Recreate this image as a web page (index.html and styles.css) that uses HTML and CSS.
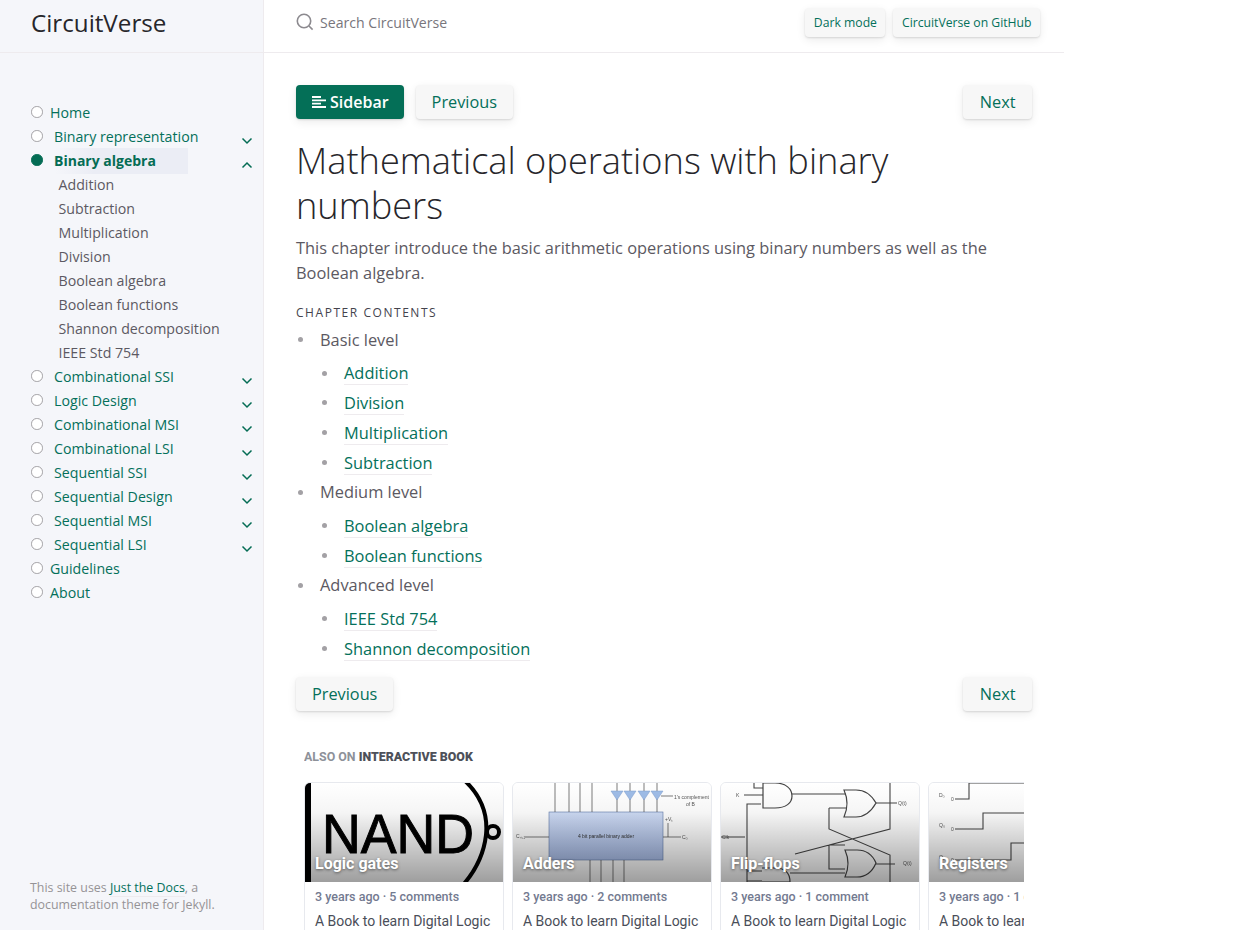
FILE: index.html
```html
<!DOCTYPE html>
<html lang="en">
<head>
<meta charset="utf-8">
<title>Mathematical operations with binary numbers</title>
<link rel="stylesheet" href="styles.css">
</head>
<body>
<div class="page">
  <aside class="sidebar">
    <div class="brand"><a class="brand-link" href="#">CircuitVerse</a></div>
    <nav class="nav">
      <div class="nav-row"><span class="dot"></span><a class="nav-link plain" href="#">Home</a></div>
      <div class="nav-row"><span class="dot"></span><a class="nav-link" href="#">Binary representation</a><svg class="chev" viewBox="0 0 12 8"><path d="M1.5 1.5 6 6l4.5-4.5"/></svg></div>
      <div class="nav-row"><span class="dot on"></span><a class="nav-link active" href="#">Binary algebra</a><svg class="chev" viewBox="0 0 12 8"><path d="M1.5 6.5 6 2l4.5 4.5"/></svg></div>
      <div class="sub">Addition</div>
      <div class="sub">Subtraction</div>
      <div class="sub">Multiplication</div>
      <div class="sub">Division</div>
      <div class="sub">Boolean algebra</div>
      <div class="sub">Boolean functions</div>
      <div class="sub">Shannon decomposition</div>
      <div class="sub">IEEE Std 754</div>
      <div class="nav-row"><span class="dot"></span><a class="nav-link" href="#">Combinational SSI</a><svg class="chev" viewBox="0 0 12 8"><path d="M1.5 1.5 6 6l4.5-4.5"/></svg></div>
      <div class="nav-row"><span class="dot"></span><a class="nav-link" href="#">Logic Design</a><svg class="chev" viewBox="0 0 12 8"><path d="M1.5 1.5 6 6l4.5-4.5"/></svg></div>
      <div class="nav-row"><span class="dot"></span><a class="nav-link" href="#">Combinational MSI</a><svg class="chev" viewBox="0 0 12 8"><path d="M1.5 1.5 6 6l4.5-4.5"/></svg></div>
      <div class="nav-row"><span class="dot"></span><a class="nav-link" href="#">Combinational LSI</a><svg class="chev" viewBox="0 0 12 8"><path d="M1.5 1.5 6 6l4.5-4.5"/></svg></div>
      <div class="nav-row"><span class="dot"></span><a class="nav-link" href="#">Sequential SSI</a><svg class="chev" viewBox="0 0 12 8"><path d="M1.5 1.5 6 6l4.5-4.5"/></svg></div>
      <div class="nav-row"><span class="dot"></span><a class="nav-link" href="#">Sequential Design</a><svg class="chev" viewBox="0 0 12 8"><path d="M1.5 1.5 6 6l4.5-4.5"/></svg></div>
      <div class="nav-row"><span class="dot"></span><a class="nav-link" href="#">Sequential MSI</a><svg class="chev" viewBox="0 0 12 8"><path d="M1.5 1.5 6 6l4.5-4.5"/></svg></div>
      <div class="nav-row"><span class="dot"></span><a class="nav-link" href="#">Sequential LSI</a><svg class="chev" viewBox="0 0 12 8"><path d="M1.5 1.5 6 6l4.5-4.5"/></svg></div>
      <div class="nav-row"><span class="dot"></span><a class="nav-link plain" href="#">Guidelines</a></div>
      <div class="nav-row"><span class="dot"></span><a class="nav-link plain" href="#">About</a></div>
    </nav>
    <footer class="side-foot">This site uses <a href="#">Just the Docs</a>, a documentation theme for Jekyll.</footer>
  </aside>
  <div class="main">
    <header class="topbar">
      <div class="search">
        <svg class="search-icon" viewBox="0 0 18 18"><circle cx="8" cy="8" r="6.7"/><path d="m13 13 3.6 3.6"/></svg>
        <span>Search CircuitVerse</span>
      </div>
      <a class="btn small" href="#">Dark mode</a>
      <a class="btn small" href="#">CircuitVerse on GitHub</a>
    </header>
    <main class="content">
      <div class="pager top">
        <a class="btn primary" href="#"><svg class="bars" viewBox="0 0 14 12"><path d="M0 1h9M0 4.3h14M0 7.6h9M0 11h14"/></svg>Sidebar</a>
        <a class="btn" href="#">Previous</a>
        <a class="btn next" href="#">Next</a>
      </div>
      <h1>Mathematical operations with binary numbers</h1>
      <p class="lead">This chapter introduce the basic arithmetic operations using binary numbers as well as the Boolean algebra.</p>
      <h2>Chapter contents</h2>
      <ul class="toc">
        <li>Basic level
          <ul>
            <li><a href="#">Addition</a></li>
            <li><a href="#">Division</a></li>
            <li><a href="#">Multiplication</a></li>
            <li><a href="#">Subtraction</a></li>
          </ul>
        </li>
        <li>Medium level
          <ul>
            <li><a href="#">Boolean algebra</a></li>
            <li><a href="#">Boolean functions</a></li>
          </ul>
        </li>
        <li>Advanced level
          <ul>
            <li><a href="#">IEEE Std 754</a></li>
            <li><a href="#">Shannon decomposition</a></li>
          </ul>
        </li>
      </ul>
      <div class="pager bottom">
        <a class="btn" href="#">Previous</a>
        <a class="btn next" href="#">Next</a>
      </div>
      <section class="also">
        <h3>ALSO ON <b>INTERACTIVE BOOK</b></h3>
        <div class="cards">
          <article class="card">
            <div class="thumb">
              <svg viewBox="0 0 198 99">
                <rect width="198" height="99" fill="#fff"/>
                <rect x="0" y="0" width="6" height="99" fill="#000"/>
                <text class="nand" x="17" y="70" textLength="152" lengthAdjust="spacingAndGlyphs">NAND</text>
                <path class="ink" d="M158-4C176 12 183 32 181 52 179 70 172 86 158 102"/>
                <circle class="ink" cx="188" cy="49" r="6"/>
              </svg>
              <span class="thumb-title">Logic gates</span>
            </div>
            <div class="meta">3 years ago · 5 comments</div>
            <div class="book">A Book to learn Digital Logic</div>
          </article>
          <article class="card">
            <div class="thumb">
              <svg viewBox="0 0 198 99">
                <defs><linearGradient id="blue" x1="0" y1="0" x2="0" y2="1"><stop offset="0" stop-color="#cfdcf5"/><stop offset="1" stop-color="#abbfea"/></linearGradient></defs>
                <rect width="198" height="99" fill="#fff"/>
                <rect x="36" y="29" width="114" height="48" fill="url(#blue)" stroke="#5f78a8" stroke-width=".6"/>
                <path class="wire" d="M42 0v29M56 0v29M67 0v29M79 0v29M104 0v29M117 0v29M131 0v29M144 0v29M77 77v22M88 77v22M100 77v22M111 77v22M12 54h24M150 54h18M155 40v14M148 13h12"/>
                <path fill="#9fbde8" stroke="#7d9ccc" stroke-width=".5" d="M98 8h12l-6 9zM111 8h12l-6 9zM125 8h12l-6 9zM138 8h12l-6 9z"/>
                <text class="tiny mid" x="93" y="55">4 bit parallel binary adder</text>
                <text class="tiny" x="161" y="16">1's complement</text>
                <text class="tiny" x="173" y="23">of B</text>
                <text class="tiny" x="3" y="55">Cₙ₊₁</text>
                <text class="tiny" x="169" y="56">C₀</text>
                <text class="tiny" x="152" y="38">+Vₛ</text>
              </svg>
              <span class="thumb-title">Adders</span>
            </div>
            <div class="meta">3 years ago · 2 comments</div>
            <div class="book">A Book to learn Digital Logic</div>
          </article>
          <article class="card">
            <div class="thumb">
              <svg viewBox="0 0 198 99">
                <rect width="198" height="99" fill="#fff"/>
                <path class="gate" d="M42 0h12C65 0 71 6 71 13S65 25 54 25H42Z"/>
                <path class="gate" d="M123 7h12C145 7 151 13 155 20 151 27 145 34 135 34H123C127 25 127 16 123 7Z"/>
                <path class="gate" d="M124 67h12C146 67 152 73 155 80 152 87 146 94 136 94H124C128 85 128 76 124 67Z"/>
                <path class="gate" d="M41 85h13C64 85 69 90 69 99H41"/>
                <path class="gate-line" d="M23 12H42M40 21H26V99M0 54H24M71 11H125M155 20H176M169 0V46L74 71M108 25H125M108 25V46L169 72V99M108 62H124M108 62V86H124M155 81H174M69 90H124M26 88H41M26 98H41M33 0V5H42"/>
                <text class="tiny" x="15" y="14">K</text>
                <text class="tiny" x="1" y="56">Clk</text>
                <text class="tiny" x="177" y="22">Q(t)</text>
                <text class="tiny" x="182" y="82">Q(t)</text>
              </svg>
              <span class="thumb-title">Flip-flops</span>
            </div>
            <div class="meta">3 years ago · 1 comment</div>
            <div class="book">A Book to learn Digital Logic</div>
          </article>
          <article class="card">
            <div class="thumb">
              <svg viewBox="0 0 198 99">
                <rect width="198" height="99" fill="#fff"/>
                <path class="gate-line" d="M26 16H40V0H198M26 46H54V30H198M26 77H82V60H198"/>
                <text class="tiny" x="10" y="14">D₀</text>
                <text class="tiny" x="22" y="18">0</text>
                <text class="tiny" x="10" y="44">Q₀</text>
                <text class="tiny" x="22" y="48">0</text>
                <text class="tiny" x="10" y="76">Q₁</text>
                <text class="tiny" x="22" y="79">0</text>
              </svg>
              <span class="thumb-title">Registers</span>
            </div>
            <div class="meta">3 years ago · 1 comment</div>
            <div class="book">A Book to learn Digital Logic</div>
          </article>
        </div>
      </section>
    </main>
  </div>
</div>
</body>
</html>
```
FILE: styles.css
```css
* { box-sizing: border-box; }
html, body { margin: 0; height: 100%; background: #fff; }
body { font-family: "Open Sans", "Noto Sans", sans-serif; color: #5c5962; overflow: hidden; }
a { color: #04705a; text-decoration: none; }

.page { display: flex; height: 930px; overflow: hidden; }

/* sidebar */
.sidebar { width: 264px; flex: none; display: flex; flex-direction: column; background: #f5f6fa; border-right: 1px solid #eeebee; }
.brand { height: 53px; padding: 0 31px; display: flex; align-items: center; border-bottom: 1px solid #eeebee; }
.brand-link { color: #27262b; font-size: 24.2px; padding-bottom: 8px; }
.nav { padding: 48px 0 0 31px; font-size: 14.2px; }
.nav-row { position: relative; display: flex; align-items: center; height: 24px; }
.dot { width: 11.5px; height: 11.5px; margin-top: -2px; border: 1.5px solid #a3a1a5; border-radius: 50%; background: #fff; flex: none; }
.dot.on { background: #046c54; border-color: #046c54; }
.nav-link { margin-left: 11.5px; line-height: 24px; }
.nav-link.plain { margin-left: 7.5px; }
.nav-link.active { font-weight: 700; font-size: 14px; color: #046c54; width: 134px; height: 26px; line-height: 26px; background: linear-gradient(-90deg, #ebedf5 0%, #ebedf5 70%, rgba(235,237,245,0) 100%); }
.chev { position: absolute; left: 210px; top: 12px; width: 12px; height: 8px; fill: none; stroke: #046c54; stroke-width: 1.5; }
.sub { height: 24px; line-height: 24px; padding-left: 27.5px; }
.side-foot { margin-top: auto; padding: 0 30px 17px; font-size: 12.4px; line-height: 17px; color: #959396; }
.side-foot a { color: #04705a; border-bottom: 1px solid #eeebee; }

/* main */
.main { width: 800px; flex: none; display: flex; flex-direction: column; }
.topbar { height: 53px; flex: none; display: flex; align-items: center; gap: 8px; padding: 0 24px 0 32px; border-bottom: 1px solid #eeebee; }
.search { flex: 1; display: flex; align-items: center; gap: 6px; font-size: 14.1px; color: #78767c; padding-bottom: 8px; }
.search-icon { width: 18px; height: 18px; fill: none; stroke: #8c8a8f; stroke-width: 1.6; }
.btn { display: inline-flex; align-items: center; height: 34px; padding: 0 16px; font-size: 16.3px; background: #f7f7f7; border-radius: 4px; box-shadow: 0 1px 2px rgba(0,0,0,.12), 0 3px 10px rgba(0,0,0,.08); }
.btn.small { height: 29px; padding: 0 8.5px; font-size: 12.2px; margin-bottom: 7px; }
.btn.primary { background: #046f57; color: #fff; font-size: 16px; font-weight: 600; padding: 0 15px 0 16px; }
.bars { width: 14px; height: 12px; margin-right: 4px; fill: none; stroke: #fff; stroke-width: 1.8; }
.next { margin-left: auto; padding: 0 16.5px; }

.content { padding: 32px 32px 0; }
.pager { display: flex; gap: 12px; }
h1 { margin: 19px 0 0; font-size: 36.2px; font-weight: 300; line-height: 45px; color: #27262b; }
.lead { margin: 7px 0 0; font-size: 16.4px; line-height: 25px; }
h2 { margin: 20px 0 0; font-size: 12px; line-height: 16px; font-weight: 400; letter-spacing: 1.55px; text-transform: uppercase; color: #44434d; }
.toc, .toc ul { list-style: none; margin: 0; padding: 0; font-size: 16.4px; }
.toc { margin-top: 6.6px; }
.toc li { position: relative; padding-left: 24px; line-height: 23.6px; }
.toc > li + li { margin-top: 6.1px; }
.toc ul { margin-top: 10px; }
.toc ul li { margin-bottom: 6.2px; }
.toc ul li:last-child { margin-bottom: 0; }
.toc li::before { content: ""; position: absolute; left: 2px; top: 9.5px; width: 5px; height: 5px; border-radius: 50%; background: #a3a1a5; }
.toc a { border-bottom: 1px solid #eeebee; }
.pager.bottom { margin-top: 16.5px; }

/* recommendations */
.also { margin: 0 8px; overflow: hidden; font-family: Roboto, sans-serif; }
.also h3 { margin: 38px 0 17.5px; font-size: 12.4px; line-height: 16px; font-weight: 700; color: #8d9199; }
.also h3 b { color: #4d5059; }
.cards { display: flex; gap: 8px; width: 900px; }
.card { width: 200px; flex: none; height: 200px; border: 1px solid #e7e9ee; border-radius: 6px; overflow: hidden; }
.thumb { position: relative; height: 99px; }
.thumb svg { display: block; width: 198px; height: 99px; filter: blur(.6px); }
.thumb::after { content: ""; position: absolute; inset: 0; background: linear-gradient(rgba(0,0,0,0) 0%, rgba(0,0,0,.04) 30%, rgba(0,0,0,.38) 100%); }
.thumb-title { position: absolute; z-index: 1; left: 10px; bottom: 8px; font-size: 16px; line-height: 20px; font-weight: 700; color: #fff; text-shadow: 0 1px 3px rgba(0,0,0,.5); }
.meta { margin: 7px 10px 0; font-size: 12.5px; line-height: 16px; font-weight: 500; color: #737a90; white-space: nowrap; }
.book { margin: 6px 10px 0; font-size: 14px; line-height: 20px; color: #4a4e59; white-space: nowrap; }
.ink { fill: none; stroke: #000; stroke-width: 4; }
.nand { font-family: "Liberation Sans", sans-serif; font-size: 56px; fill: #000; stroke: #000; stroke-width: 1; }
.wire { fill: none; stroke: #444; stroke-width: .7; }
.gate { fill: #fff; stroke: #444; stroke-width: 1.2; }
.gate-line { fill: none; stroke: #444; stroke-width: 1.1; }
.tiny { font-family: "Liberation Sans", sans-serif; font-size: 5px; fill: #555; }
.mid { text-anchor: middle; fill: #333; }
```
